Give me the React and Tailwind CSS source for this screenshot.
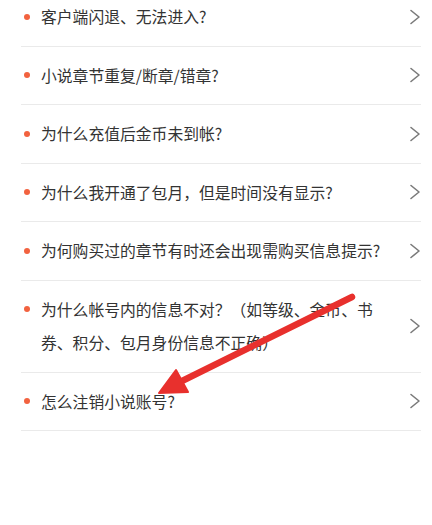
import React from 'react';

const questions = [
  '客户端闪退、无法进入?',
  '小说章节重复/断章/错章?',
  '为什么充值后金币未到帐?',
  '为什么我开通了包月，但是时间没有显示?',
  '为何购买过的章节有时还会出现需购买信息提示?',
  '为什么帐号内的信息不对？（如等级、金币、书券、积分、包月身份信息不正确）',
  '怎么注销小说账号?',
];

const Chevron = () => (
  <svg width="12" height="16" viewBox="0 0 12 16" fill="none" className="shrink-0">
    <path d="M2 1.5 L10 8 L2 14.5" stroke="#7a7a7a" strokeWidth="1.6" strokeLinecap="round" strokeLinejoin="round" />
  </svg>
);

export default function App() {
  return (
    <div
      className="relative min-h-screen w-[432px] overflow-hidden bg-white"
      style={{ fontFamily: '"Noto Sans CJK SC", "Noto Sans", sans-serif' }}
    >
      {/* FAQ list (scrolled slightly past the top) */}
      <ul className="-mt-[12px] ml-[21px] mr-[11px]">
        {questions.map((q, i) => (
          <li key={i} className="flex items-center border-b border-[#eaeaea] py-3">
            <div className="flex flex-1 items-start">
              <span className="flex h-[33.5px] w-[20px] shrink-0 items-center">
                <span className="ml-[3px] h-[6px] w-[6px] rounded-full bg-[#f2623f]" />
              </span>
              <p className="w-[344px] text-[15.8px] leading-[33.5px] text-[#333333]">{q}</p>
            </div>
            <Chevron />
          </li>
        ))}
      </ul>

      {/* Red annotation arrow */}
      <svg className="pointer-events-none absolute left-0 top-0" width="432" height="525" viewBox="0 0 432 525">
        <line x1="352" y1="297" x2="178" y2="383" stroke="#e8302d" strokeWidth="6.5" strokeLinecap="round" />
        <polygon points="159,393 176,370 188,392" fill="#e8302d" stroke="#e8302d" strokeWidth="2" strokeLinejoin="round" />
      </svg>
    </div>
  );
}
